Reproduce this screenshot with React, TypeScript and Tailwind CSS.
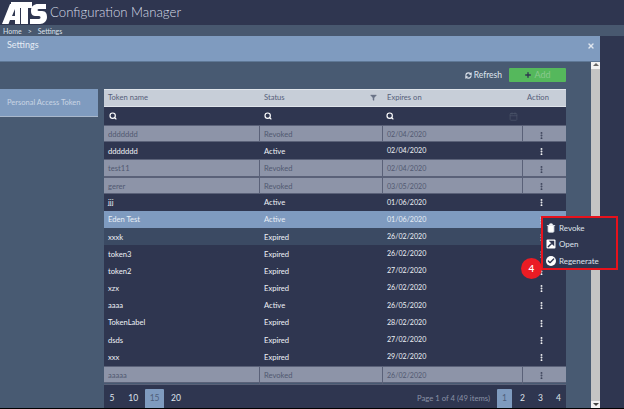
import { Calendar, Check, Filter, MoreVertical, Plus, RefreshCw, Search, Trash2, X } from 'lucide-react'

const font = "font-['Lato','Noto_Sans',sans-serif]"

type Row = { name: string; status: string; date: string; kind: 'revoked' | 'normal' | 'selected' | 'hover' }

const rows: Row[] = [
  { name: 'ddddddd', status: 'Revoked', date: '02/04/2020', kind: 'revoked' },
  { name: 'ddddddd', status: 'Active', date: '02/04/2020', kind: 'normal' },
  { name: 'test11', status: 'Revoked', date: '02/04/2020', kind: 'revoked' },
  { name: 'gerer', status: 'Revoked', date: '03/05/2020', kind: 'revoked' },
  { name: 'jjj', status: 'Active', date: '01/06/2020', kind: 'normal' },
  { name: 'Eden Test', status: 'Active', date: '01/06/2020', kind: 'selected' },
  { name: 'xxxk', status: 'Expired', date: '26/02/2020', kind: 'hover' },
  { name: 'token3', status: 'Expired', date: '26/02/2020', kind: 'normal' },
  { name: 'token2', status: 'Expired', date: '27/02/2020', kind: 'normal' },
  { name: 'xzx', status: 'Expired', date: '26/02/2020', kind: 'normal' },
  { name: 'aaaa', status: 'Active', date: '26/05/2020', kind: 'normal' },
  { name: 'TokenLabel', status: 'Expired', date: '28/02/2020', kind: 'normal' },
  { name: 'dsds', status: 'Expired', date: '27/02/2020', kind: 'normal' },
  { name: 'xxx', status: 'Expired', date: '29/02/2020', kind: 'normal' },
  { name: 'aaaaa', status: 'Revoked', date: '26/02/2020', kind: 'revoked' },
]

const rowColors: Record<Row['kind'], string> = {
  revoked: 'bg-[#8d94a8] text-[#515971] border-y border-[#5a6178]',
  normal: 'bg-[#2f3650] text-[#eef1f6]',
  selected: 'bg-[#7f9bc0] text-[#e8eef6]',
  hover: 'bg-[#3b4a63] text-[#eef1f6]',
}

const gridCols = 'grid grid-cols-[156px_123px_140px_43px]'

function Logo() {
  return (
    <svg width="46" height="24" viewBox="0 0 46 24" fill="white" className="shrink-0">
      <path fillRule="evenodd" d="M1 23 L9 3 H19 V23 H14 V19 H9 L7.5 23 Z M14 8 L11 15 H14 Z" />
      <path d="M10 1 H31 V7 H27 V23 H20 V7 H10 Z" />
      <path d="M30 10 C30 5 33 3 37 3 H45 V8 H38 C36 8 36 10 38 10 H41 C45 10 46 13 46 16 C46 20 43 23 39 23 H29 V18 H38 C40 18 40 15 38 15 H35 C32 15 30 14 30 10 Z" />
    </svg>
  )
}

export default function App() {
  return (
    <div className={`${font} relative flex h-[409px] w-[624px] flex-col overflow-hidden bg-[#2f3650] text-white`}>
      <header className="flex h-[25px] items-center gap-[3px] pl-[1px]">
        <Logo />
        <span className="text-[13.2px] font-light text-[#d5dbe6]">Configuration Manager</span>
      </header>
      <div className="flex h-[11px] items-center gap-[6px] bg-[#48586f] pl-[3px] pt-px text-[7px] text-[#dbe2ec]">
        <span>Home</span>
        <span>&gt;</span>
        <span>Settings</span>
      </div>

      <div className="flex min-h-0 flex-1 pb-px">
        <div className="flex w-[600px] flex-col">
          <div className="flex h-[26px] items-start justify-between border-b border-[#5f7896] bg-[#7f9bbf] pr-[5px]">
            <span className="pl-[7px] pt-[2px] text-[9px] text-[#e6ecf4]">Settings</span>
            <X size={8} strokeWidth={4} className="mt-[6px] text-[#dfe6ef]" />
          </div>

          <div className="flex min-h-0 flex-1 bg-[#485a72]">
            <div className="w-[104px] shrink-0 pt-[27px]">
              <div className="flex h-[28px] w-[98px] items-center border-b border-[#a9b8cc] bg-[#7f9bbf] pl-[7px] text-[7.5px] text-[#c9d5e4]">
                Personal Access Token
              </div>
            </div>

            <div className="flex w-[462px] shrink-0 flex-col">
              <div className="flex h-[27px] items-center justify-end gap-[7px] pb-[1px]">
                <span className="flex items-center gap-[2px] text-[8.5px] text-[#dfe5ee]">
                  <RefreshCw size={7} strokeWidth={3.5} />
                  Refresh
                </span>
                <button className="flex h-[14px] w-[57px] items-center justify-center gap-[2px] rounded-[1px] bg-[#55b85c] text-[9px] text-[#8ac98e]">
                  <Plus size={8} strokeWidth={4} className="text-[#2f3650]" />
                  Add
                </button>
              </div>

              <div className={`${gridCols} h-[18px] items-center border-y border-[#dfe4ea] bg-[#c7ced8] text-[7.6px] text-[#56607a]`}>
                <span className="pl-[4px]">Token name</span>
                <span className="flex items-center justify-between pl-[4px] pr-[6px]">
                  Status
                  <Filter size={7} fill="#6b7488" strokeWidth={1} className="text-[#6b7488]" />
                </span>
                <span className="pl-[4px]">Expires on</span>
                <span className="pl-[4px]">Action</span>
              </div>

              <div className={`${gridCols} h-[18px] items-center bg-[#2f3650]`}>
                <Search size={8} strokeWidth={3.5} className="ml-[5px]" />
                <Search size={8} strokeWidth={3.5} className="ml-[4px]" />
                <div className="flex items-center justify-between pl-[3px] pr-[5px]">
                  <Search size={8} strokeWidth={3.5} />
                  <Calendar size={9} className="text-[#4b5469]" />
                </div>
                <span />
              </div>

              <div className="flex flex-col">
                {rows.map((row, i) => {
                  const cell = row.kind === 'revoked' ? 'h-full border-r border-[#5a6178] pl-[4px] leading-[17px]' : 'pl-[4px] pt-px'
                  return (
                    <div key={i} className={`${gridCols} h-[17.2px] items-center text-[7.6px] ${rowColors[row.kind]}`}>
                      <span className={cell}>{row.name}</span>
                      <span className={cell}>{row.status}</span>
                      <span className={`${cell} text-[7.1px]`}>{row.date}</span>
                      <span className="flex pl-[14px] pt-px">
                        <MoreVertical size={9} strokeWidth={3} className={row.kind === 'revoked' ? 'text-[#3a4158]' : 'text-white'} />
                      </span>
                    </div>
                  )
                })}
              </div>

              <div className="mt-[1px] flex flex-1 items-stretch justify-between border-t border-[#5a6178] bg-[#2f3650] pt-[4px] text-[8.5px] text-[#dfe4ec]">
                <div className="-ml-[1.5px] flex gap-[2.3px]">
                  {['5', '10', '15', '20'].map((n) => (
                    <span key={n} className={`flex w-[19px] items-center justify-center rounded-t-[1px] ${n === '15' ? 'bg-[#7f9bbf] text-[#4f5f7c]' : ''}`}>{n}</span>
                  ))}
                </div>
                <div className="flex items-center">
                  <span className="mr-[7px] text-[7.7px] text-[#8a92a6]">Page 1 of 4 (49 items)</span>
                  <div className="flex h-full gap-[3px]">
                    {['1', '2', '3', '4'].map((n) => (
                      <span key={n} className={`flex h-full w-[15px] items-center justify-center rounded-t-[1px] ${n === '1' ? 'bg-[#7f9bbf] text-[#4f5f7c]' : ''}`}>{n}</span>
                    ))}
                  </div>
                </div>
              </div>
            </div>

            <div className="flex-1" />

            <div className="flex w-[9px] shrink-0 flex-col items-center bg-[#f2f2f2]">
              <span className="mt-[1px] h-0 w-0 border-x-[3px] border-b-[3px] border-x-transparent border-b-[#666]" />
              <div className="mt-[3px] w-full flex-1 bg-[#c4c4c4]" />
              <span className="my-[2px] h-0 w-0 border-x-[3px] border-t-[3px] border-x-transparent border-t-[#444]" />
            </div>
          </div>
        </div>
      </div>
      <div className="absolute bottom-0 left-0 h-px w-full bg-black" />

      {/* context menu and the red annotation over it */}
      <div className="absolute left-[543px] top-[218px] flex h-[50px] w-[73px] flex-col justify-center gap-[3.5px] bg-[#2f3650] pl-[3px] pt-[2px] text-[8px] text-[#dfe4ec] outline outline-2 outline-[#e8121c]">
        <div className="flex h-[13px] items-center gap-[3px]"><Trash2 size={10} fill="white" strokeWidth={2} />Revoke</div>
        <div className="flex h-[13px] items-center gap-[3px]">
          <svg width="10" height="10" viewBox="0 0 10 10">
            <rect x="0.5" y="0.5" width="9" height="9" rx="1" fill="white" />
            <path d="M2 8 L6 4 M4.5 2.5 H7.5 V5.5 Z" stroke="#2f3650" strokeWidth="1.5" fill="#2f3650" />
          </svg>
          Open
        </div>
        <div className="flex h-[13px] items-center gap-[3px]">
          <span className="flex h-[10px] w-[10px] items-center justify-center rounded-full bg-white text-[#2f3650]"><Check size={8} strokeWidth={4} /></span>
          Regenerate
        </div>
      </div>
      <div className="absolute left-[521px] top-[258px] flex h-[21px] w-[21px] items-center justify-center rounded-full bg-[#ea1c24] text-[10px] font-semibold text-white">4</div>
    </div>
  )
}
